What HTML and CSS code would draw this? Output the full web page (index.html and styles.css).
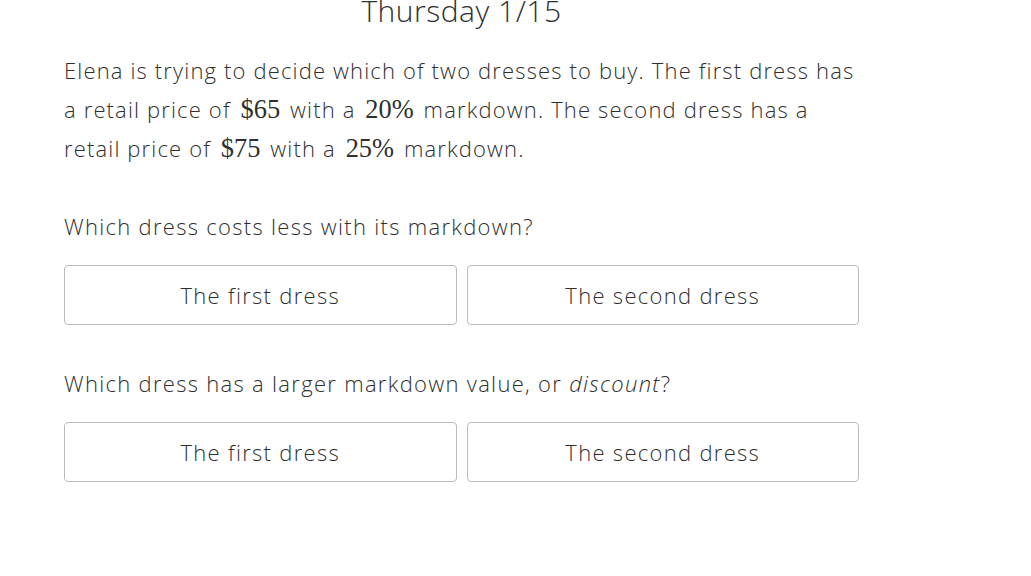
FILE: index.html
```html
<!DOCTYPE html>
<html lang="en">
<head>
  <meta charset="UTF-8">
  <meta name="viewport" content="width=device-width, initial-scale=1.0">
  <title>Thursday 1/15</title>
  <link rel="stylesheet" href="styles.css">
</head>
<body>
  <div class="page">
    <h1 class="day-title">Thursday 1/15</h1>

    <p class="story">
      Elena is trying to decide which of two dresses to buy. The first dress has
      a retail price of <span class="math">$65</span> with a <span class="math">20%</span> markdown. The second dress has a
      retail price of <span class="math">$75</span> with a <span class="math">25%</span> markdown.
    </p>

    <div class="question">
      <p class="prompt">Which dress costs less with its markdown?</p>
      <div class="choices">
        <button class="choice">The first dress</button>
        <button class="choice">The second dress</button>
      </div>
    </div>

    <div class="question">
      <p class="prompt">Which dress has a larger markdown value, or <em>discount</em>?</p>
      <div class="choices">
        <button class="choice">The first dress</button>
        <button class="choice">The second dress</button>
      </div>
    </div>
  </div>
</body>
</html>
```

FILE: styles.css
```css
body {
  margin: 0;
  font-family: "Open Sans", Roboto, sans-serif;
  font-weight: 300;
  letter-spacing: 1.3px;
  color: #2f2f2f;
  background-color: #fff;
}

.page {
  width: 795px;
  margin-left: 64px;
}

.day-title {
  margin: -7px 0 0;
  font-size: 30px;
  font-weight: 300;
  letter-spacing: 0.5px;
  line-height: 36px;
  text-align: center;
}

.story {
  margin: 22px 0 0;
  font-size: 22px;
  line-height: 39px;
  letter-spacing: 1.15px;
}

.math {
  font-family: "Liberation Serif", serif;
  font-size: 1.2em;
  font-weight: 400;
  letter-spacing: 0;
  margin: 0 3px;
}

.question {
  margin-top: 39px;
}

.prompt {
  margin: 0;
  font-size: 22px;
  line-height: 39px;
}

.choices {
  display: grid;
  grid-template-columns: 1fr 1fr;
  gap: 10px;
  margin-top: 19px;
}

.choice {
  height: 60px;
  background-color: #fff;
  border: 1px solid #bbb;
  border-radius: 4px;
  font-family: inherit;
  font-weight: 300;
  font-size: 22px;
  letter-spacing: 1.3px;
  color: #2f2f2f;
  cursor: pointer;
}
```
